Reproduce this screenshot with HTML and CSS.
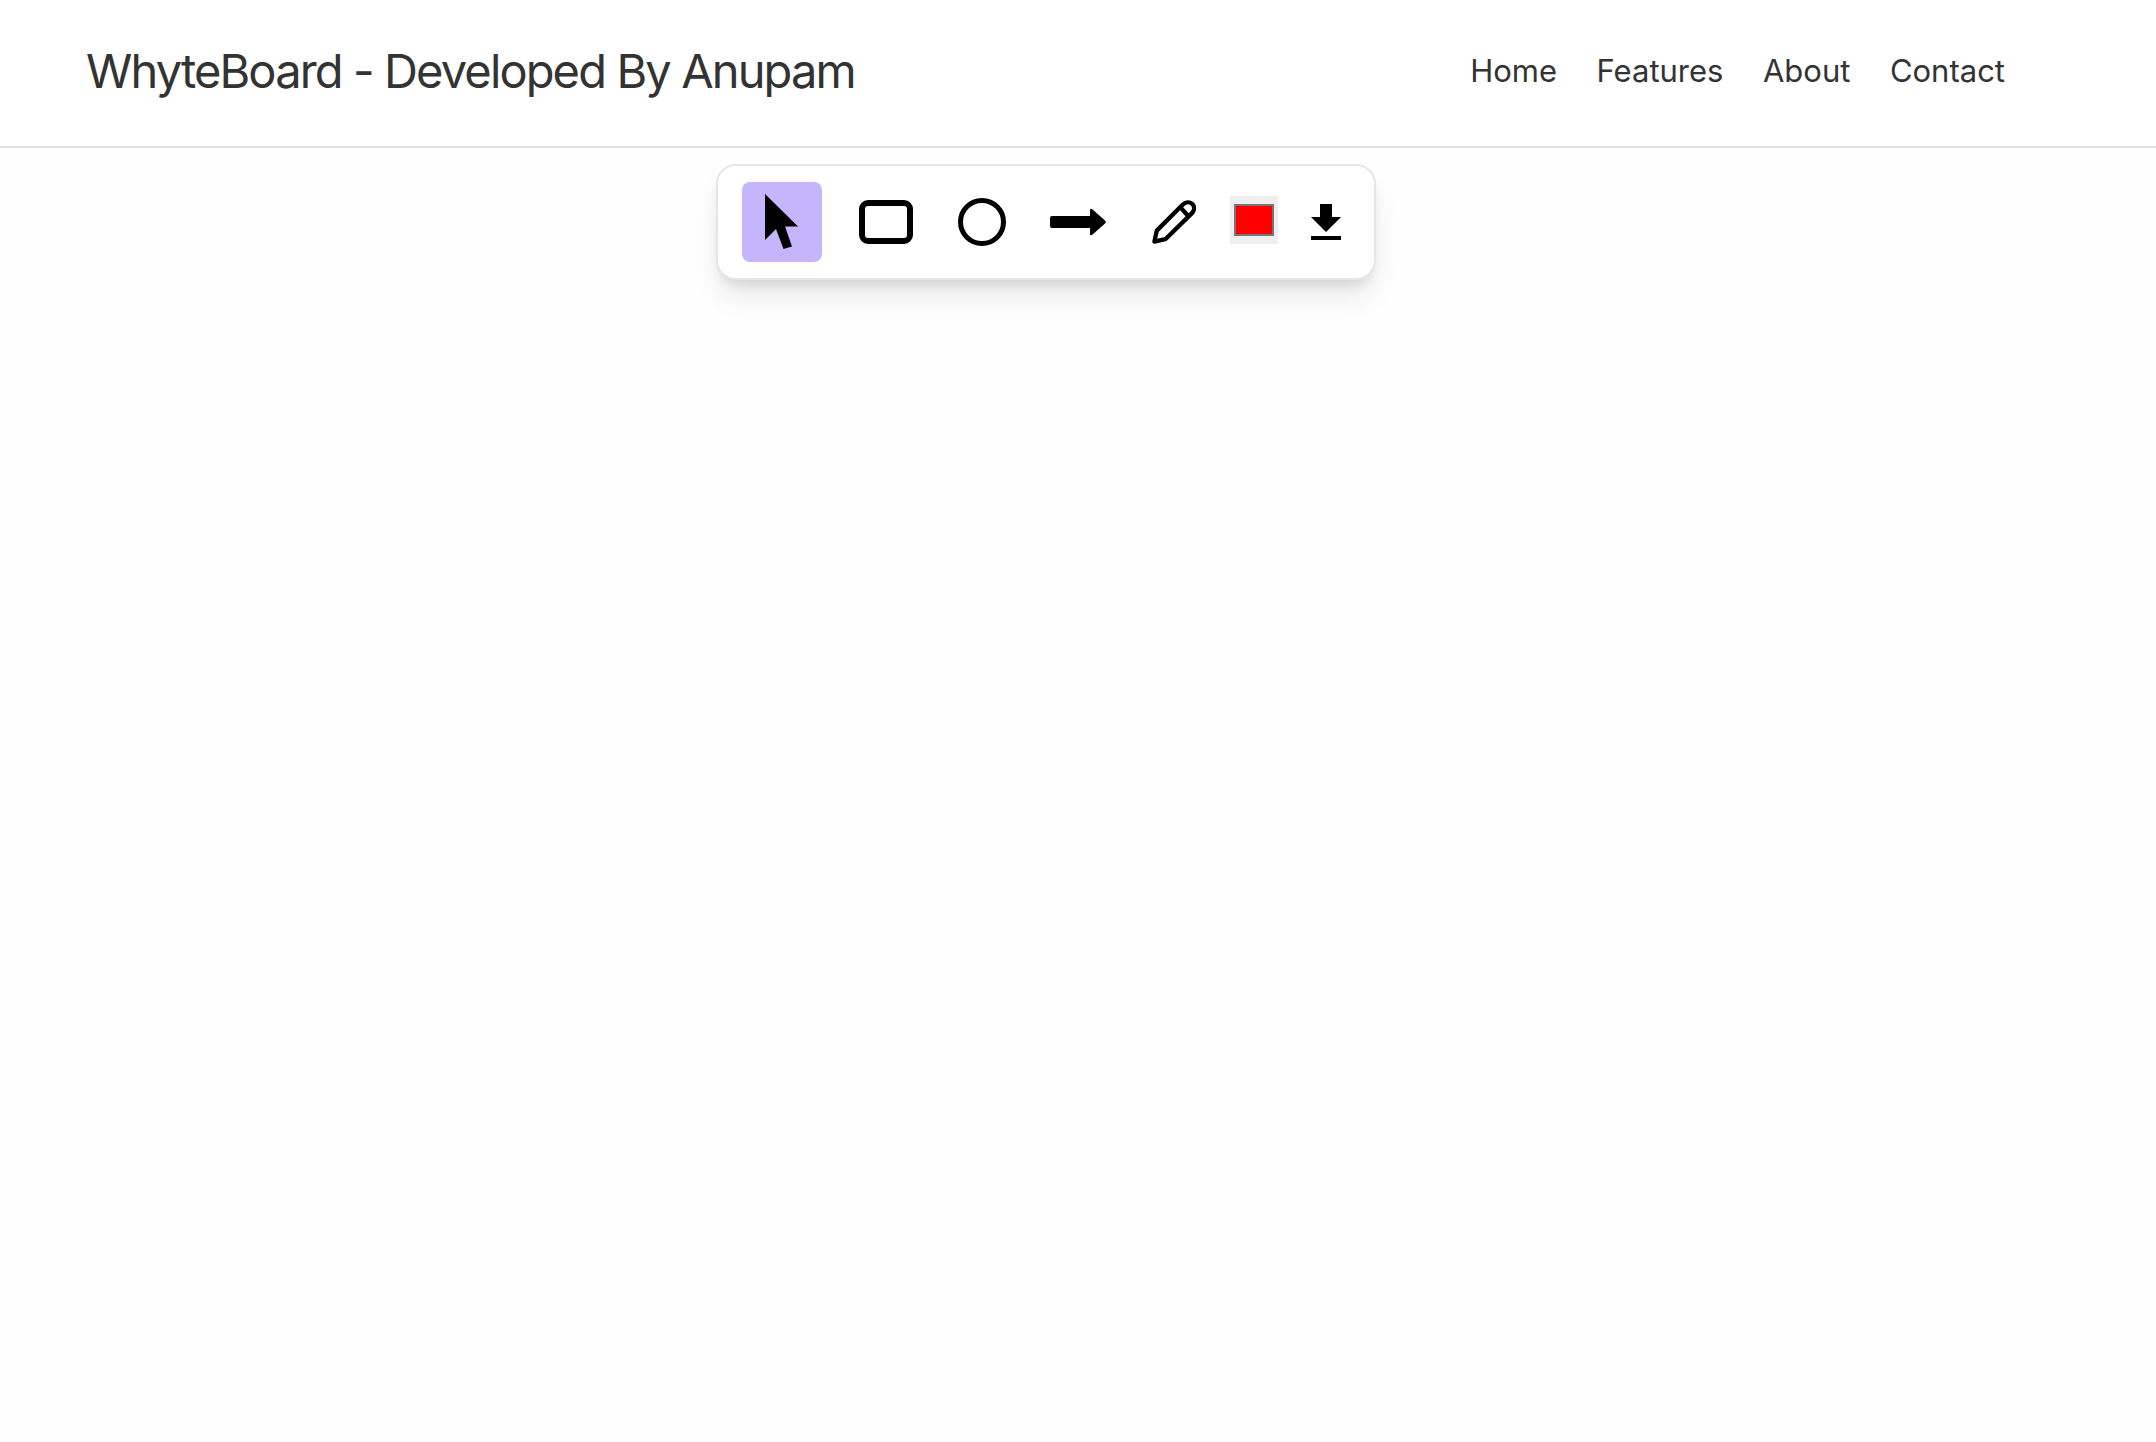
FILE: index.html
```html
<!DOCTYPE html>
<html lang="en">
<head>
<meta charset="utf-8">
<title>WhyteBoard</title>
<link rel="stylesheet" href="styles.css">
</head>
<body>
<header class="navbar">
  <div class="brand">WhyteBoard - Developed By Anupam</div>
  <nav class="nav-links">
    <a href="#">Home</a>
    <a href="#">Features</a>
    <a href="#">About</a>
    <a href="#">Contact</a>
  </nav>
</header>
<main class="board">
  <div class="toolbar">
    <button class="tool tool-active" type="button" aria-label="Select">
      <svg width="80" height="80" viewBox="0 0 80 80"><path d="M23 12 V58 L34 47 L41.500 67 L50 64.500 L43 44.500 H56 Z"/></svg>
    </button>
    <button class="tool tool-rect" type="button" aria-label="Rectangle">
      <svg width="54" height="44" viewBox="0 0 54 44"><rect x="3" y="3" width="48" height="38" rx="6" class="outline outline-heavy"/></svg>
    </button>
    <button class="tool tool-circle" type="button" aria-label="Circle">
      <svg width="48" height="48" viewBox="0 0 48 48"><circle cx="24" cy="24" r="21.500" class="outline"/></svg>
    </button>
    <button class="tool tool-arrow" type="button" aria-label="Arrow">
      <svg width="56" height="28" viewBox="0 0 56 28"><path d="M2 8 H40 V2 Q40 0 42 1 L55 12.500 Q56.500 14 55 15.500 L42 27 Q40 28 40 26 V20 H2 Q0 20 0 18 V10 Q0 8 2 8 Z"/></svg>
    </button>
    <button class="tool tool-pencil" type="button" aria-label="Pencil">
      <svg width="44" height="44" viewBox="0 0 46 46"><path d="M2.500 43.500 L5 32 L32 5 C35 2 39 1.500 42 4 C45 7 44.500 11 41.500 14 L14 41 Z M30 8 L38 17" class="pen"/></svg>
    </button>
    <span class="swatch"><span class="swatch-fill"></span></span>
    <button class="tool tool-download" type="button" aria-label="Download">
      <svg width="30" height="36" viewBox="0 0 30 36"><path d="M9 0 H21 V13 H30 L15 28 L0 13 H9 Z M0 32 H30 V36 H0 Z"/></svg>
    </button>
  </div>
</main>
</body>
</html>
```

FILE: styles.css
```css
* { box-sizing: border-box; }
html, body { margin: 0; height: 100%; }
body {
  background: #fefefe;
  font-family: Inter, "Liberation Sans", sans-serif;
  color: #333;
}
.navbar {
  height: 148px;
  display: flex;
  align-items: center;
  justify-content: space-between;
  padding: 0 151px 5px 86px;
  border-bottom: 2px solid #e0e0e0;
  background: #fff;
}
.brand { font-size: 47px; letter-spacing: -1.87px; line-height: 1.2; margin-top: 2px; }
.nav-links { display: flex; gap: 39.5px; }
.nav-links a { font-size: 31px; color: #333; text-decoration: none; }
.board {
  display: flex;
  justify-content: center;
  padding: 16px 64px 0 0;
}
.toolbar {
  width: 660px;
  height: 116px;
  display: flex;
  align-items: center;
  padding: 0 0 0 24px;
  background: #fff;
  border: 2px solid #e6e6e6;
  border-radius: 20px;
  box-shadow: 0 20px 30px -6px rgba(0, 0, 0, 0.1), 0 8px 12px -4px rgba(0, 0, 0, 0.1);
}
.tool {
  display: flex;
  align-items: center;
  justify-content: center;
  padding: 0;
  border: 0;
  background: none;
  color: #000;
}
.tool svg { display: block; fill: #000; }
.tool-active { width: 80px; height: 80px; background: #c4b5fd; border-radius: 8px; }
.tool-rect { margin-left: 37px; }
.tool-circle { margin-left: 45px; }
.tool-arrow { margin-left: 44px; }
.tool-pencil { margin-left: 46px; }
.tool-download { margin-left: 33px; }
.tool svg .outline { fill: none; stroke: #000; stroke-width: 5; }
.tool svg .outline-heavy { stroke-width: 6; }
.tool svg .pen { fill: none; stroke: #000; stroke-width: 4.500; stroke-linejoin: round; }
.swatch {
  width: 48px;
  height: 48px;
  margin-left: 34px;
  margin-top: -4px;
  padding: 8px 4px;
  background: #efefef;
  display: block;
}
.swatch-fill {
  display: block;
  width: 40px;
  height: 32px;
  background: #f00;
  border: 2px solid #767676;
}
```
